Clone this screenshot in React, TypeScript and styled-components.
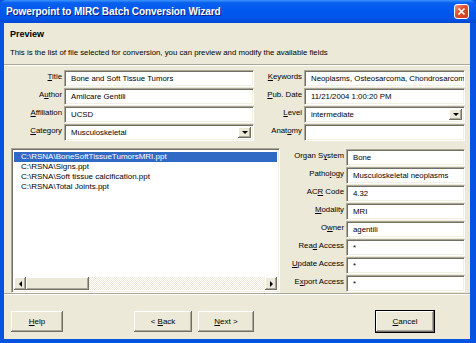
import styled, { createGlobalStyle } from 'styled-components';

const GlobalStyle = createGlobalStyle`
  html, body {
    margin: 0;
    padding: 0;
    background: #ffffff;
  }
  body {
    font-family: "Liberation Sans", Arial, sans-serif;
    font-size: 8px;
    color: #000;
  }
`;

const Window = styled.div`
  width: 476px;
  height: 343px;
  background: #0553e0;
  display: flex;
  flex-direction: column;
  box-sizing: border-box;
`;

const TitleBar = styled.div`
  height: 23px;
  flex: none;
  display: flex;
  align-items: center;
  justify-content: space-between;
  padding: 0 7px 0 6px;
  background: linear-gradient(to bottom, #3d95ff 0%, #0a61ee 12%, #0058ee 45%, #0054e8 80%, #0048d0 100%);
  border-radius: 6px 6px 0 0;
`;

const TitleText = styled.span`
  color: #fff;
  font-weight: 700;
  font-size: 10px;
  letter-spacing: -0.1px;
  text-shadow: 1px 1px 0 #0a1e80;
`;

const CloseBox = styled.div`
  width: 13px;
  height: 13px;
  border: 1px solid #fff;
  border-radius: 3px;
  background: linear-gradient(135deg, #f09a80 0%, #e0532f 40%, #c9391a 100%);
  display: flex;
  align-items: center;
  justify-content: center;
`;

const Client = styled.div`
  flex: 1;
  margin: 0 6px 4px 4px;
  background: #ece9d8;
  display: flex;
  flex-direction: column;
`;

const Header = styled.div`
  height: 41px;
  box-sizing: border-box;
  padding: 6px 0 0 6px;
  display: flex;
  flex-direction: column;
  gap: 7px;
`;

const HeaderTitle = styled.div`
  font-weight: 700;
  font-size: 9px;
  line-height: 11px;
`;

const HeaderText = styled.div`
  font-size: 7.8px;
  line-height: 11px;
`;

const Etched = styled.div`
  height: 1px;
  flex: none;
  background: #aca899;
  border-bottom: 1px solid #ffffff;
`;

const TopForm = styled.div`
  display: flex;
  padding-top: 4px;
`;

const Column = styled.div`
  display: flex;
  flex-direction: column;
  gap: 1px;
`;

const Row = styled.div`
  display: flex;
  height: 17px;
`;

const Label = styled.label<{ $w: number }>`
  width: ${p => p.$w}px;
  flex: none;
  text-align: right;
  padding: 2px 2px 0 0;
  box-sizing: border-box;
  font-size: 7.8px;
  line-height: 10px;
  white-space: nowrap;
  color: #000;
`;

const Field = styled.div<{ $w: number }>`
  width: ${p => p.$w}px;
  flex: none;
  height: 17px;
  box-sizing: border-box;
  background: #ffffff;
  border-top: 1px solid #aca899;
  border-left: 1px solid #aca899;
  border-right: 1px solid #ffffff;
  border-bottom: 1px solid #ffffff;
  box-shadow: inset 1px 1px 0 #716f64, inset -1px -1px 0 #f1efe2;
  display: flex;
  align-items: center;
  padding-left: 6px;
  font-size: 7.8px;
  white-space: nowrap;
  overflow: hidden;
  position: relative;
`;

const DropButton = styled.div`
  position: absolute;
  right: 2px;
  top: 2px;
  width: 13px;
  height: 11px;
  background: #ece9d8;
  box-shadow: inset -1px -1px 0 #716f64, inset 1px 1px 0 #ffffff, inset -2px -2px 0 #aca899;
  display: flex;
  align-items: center;
  justify-content: center;
`;

const Middle = styled.div`
  display: flex;
  margin-top: 7px;
  height: 145px;
`;

const ListBox = styled.div`
  width: 269px;
  margin-left: 7px;
  box-sizing: border-box;
  background: #ffffff;
  border-top: 1px solid #aca899;
  border-left: 1px solid #aca899;
  border-right: 1px solid #ffffff;
  border-bottom: 1px solid #ffffff;
  box-shadow: inset 1px 1px 0 #716f64, inset -1px -1px 0 #f1efe2;
  padding: 2px;
  display: flex;
  flex-direction: column;
`;

const Items = styled.div`
  flex: 1;
  padding-top: 1px;
`;

const Item = styled.div<{ $sel?: boolean }>`
  height: 10px;
  line-height: 10px;
  padding-left: 7px;
  font-size: 8px;
  white-space: nowrap;
  background: ${p => (p.$sel ? '#316ac5' : 'transparent')};
  color: ${p => (p.$sel ? '#ffffff' : '#000000')};
`;

const HScroll = styled.div`
  height: 13px;
  display: flex;
  background: repeating-conic-gradient(#ffffff 0% 25%, #ece9d8 0% 50%) 0 0 / 2px 2px;
`;

const ScrollPart = styled.div<{ $w: number }>`
  width: ${p => p.$w}px;
  flex: none;
  background: #ece9d8;
  box-shadow: inset -1px -1px 0 #716f64, inset 1px 1px 0 #ffffff, inset -2px -2px 0 #aca899;
  display: flex;
  align-items: center;
  justify-content: center;
`;

const Track = styled.div`
  flex: 1;
`;

const SideForm = styled.div`
  display: flex;
  flex-direction: column;
  gap: 1px;
  padding-top: 1px;
`;

const Footer = styled.div`
  display: flex;
  padding: 13px 0 0 6px;
  margin-top: 2px;
`;

const Button = styled.div<{ $w: number; $ml?: number; $focus?: boolean }>`
  width: ${p => p.$w}px;
  height: 23px;
  margin-left: ${p => p.$ml ?? 0}px;
  box-sizing: border-box;
  background: #ece9d8;
  border: 1px solid ${p => (p.$focus ? '#000000' : 'transparent')};
  box-shadow: inset -1px -1px 0 #716f64, inset 1px 1px 0 #ffffff, inset -2px -2px 0 #aca899;
  display: flex;
  align-items: center;
  justify-content: center;
  font-size: 8px;
`;

const Tri = ({ dir }: { dir: 'down' | 'left' | 'right' }) => {
  const pts = dir === 'down' ? '0,0 6,0 3,3' : dir === 'left' ? '3,0 3,6 0,3' : '0,0 0,6 3,3';
  const w = dir === 'down' ? 6 : 3;
  const h = dir === 'down' ? 3 : 6;
  return (
    <svg width={w} height={h} viewBox={`0 0 ${w} ${h}`}>
      <polygon points={pts} fill="#000" />
    </svg>
  );
};

type F = { label: React.ReactNode; value: string; combo?: boolean };

const leftFields: F[] = [
  { label: <><u>T</u>itle</>, value: 'Bone and Soft Tissue Tumors' },
  { label: <>A<u>u</u>thor</>, value: 'Amilcare Gentili' },
  { label: <><u>A</u>ffiliation</>, value: ' UCSD' },
  { label: <><u>C</u>ategory</>, value: 'Musculoskeletal', combo: true },
];

const rightFields: F[] = [
  { label: <><u>K</u>eywords</>, value: 'Neoplasms, Osteosarcoma, Chondrosarcoma' },
  { label: <><u>P</u>ub. Date</>, value: '11/21/2004 1:00:20 PM' },
  { label: <><u>L</u>evel</>, value: 'intermediate', combo: true },
  { label: <>Anat<u>o</u>my</>, value: '' },
];

const sideFields: F[] = [
  { label: <>Organ S<u>y</u>stem</>, value: 'Bone' },
  { label: <>Patho<u>l</u>ogy</>, value: 'Musculoskeletal neoplasms' },
  { label: <>AC<u>R</u> Code</>, value: '4.32' },
  { label: <><u>M</u>odality</>, value: 'MRI' },
  { label: <>O<u>w</u>ner</>, value: 'agentili' },
  { label: <>Rea<u>d</u> Access</>, value: '*' },
  { label: <><u>U</u>pdate Access</>, value: '*' },
  { label: <>E<u>x</u>port Access</>, value: '*' },
];

const files = [
  'C:\\RSNA\\BoneSoftTissueTumorsMRI.ppt',
  'C:\\RSNA\\Signs.ppt',
  'C:\\RSNA\\Soft tissue calcification.ppt',
  'C:\\RSNA\\Total Joints.ppt',
];

const FieldRow = ({ f, lw, fw }: { f: F; lw: number; fw: number }) => (
  <Row>
    <Label $w={lw}>{f.label}</Label>
    <Field $w={fw}>
      {f.value}
      {f.combo && (
        <DropButton>
          <Tri dir="down" />
        </DropButton>
      )}
    </Field>
  </Row>
);

export default function App() {
  return (
    <>
      <GlobalStyle />
      <Window>
        <TitleBar>
          <TitleText>Powerpoint to MIRC Batch Conversion Wizard</TitleText>
          <CloseBox>
            <svg width="9" height="9" viewBox="0 0 9 9">
              <path d="M1.5 1.5 L7.5 7.5 M7.5 1.5 L1.5 7.5" stroke="#fff" strokeWidth="1.6" />
            </svg>
          </CloseBox>
        </TitleBar>
        <Client>
          <Header>
            <HeaderTitle>Preview</HeaderTitle>
            <HeaderText>
              This is the list of file selected for conversion, you can preview and modify the available fields
            </HeaderText>
          </Header>
          <Etched />
          <TopForm>
            <Column>
              {leftFields.map((f, i) => (
                <FieldRow key={i} f={f} lw={60} fw={190} />
              ))}
            </Column>
            <Column>
              {rightFields.map((f, i) => (
                <FieldRow key={i} f={f} lw={50} fw={161} />
              ))}
            </Column>
          </TopForm>
          <Middle>
            <ListBox>
              <Items>
                {files.map((name, i) => (
                  <Item key={name} $sel={i === 0}>
                    {name}
                  </Item>
                ))}
              </Items>
              <HScroll>
                <ScrollPart $w={12}>
                  <Tri dir="left" />
                </ScrollPart>
                <ScrollPart $w={63} />
                <Track />
                <ScrollPart $w={12}>
                  <Tri dir="right" />
                </ScrollPart>
              </HScroll>
            </ListBox>
            <SideForm>
              {sideFields.map((f, i) => (
                <FieldRow key={i} f={f} lw={66} fw={119} />
              ))}
            </SideForm>
          </Middle>
          <Etched />
          <Footer>
            <Button $w={54}>
              <span>
                <u>H</u>elp
              </span>
            </Button>
            <Button $w={60} $ml={69}>
              <span>
                &lt; <u>B</u>ack
              </span>
            </Button>
            <Button $w={58} $ml={4}>
              <span>
                <u>N</u>ext &gt;
              </span>
            </Button>
            <Button $w={60} $ml={120} $focus>
              <span>
                <u>C</u>ancel
              </span>
            </Button>
          </Footer>
        </Client>
      </Window>
    </>
  );
}
